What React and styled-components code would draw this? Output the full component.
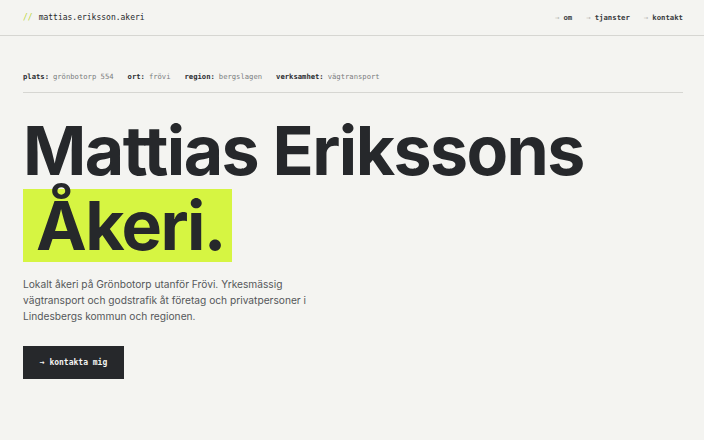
import React from "react";
import styled, { createGlobalStyle } from "styled-components";

const Global = createGlobalStyle`
  html, body { margin: 0; padding: 0; background: #f4f4f1; }
  body { -webkit-font-smoothing: antialiased; }
  * { box-sizing: border-box; }
`;

const mono = `"DejaVu Sans Mono", "Liberation Mono", monospace`;
const sans = `Inter, "Noto Sans", sans-serif`;

const Page = styled.div`
  min-height: 440px;
  background: #f4f4f1;
  color: #26282b;
`;

const Header = styled.header`
  height: 36px;
  display: flex;
  align-items: center;
  justify-content: space-between;
  padding: 0 21px 0 23px;
  border-bottom: 1px solid #d6d6d2;
`;

const Logo = styled.div`
  font-family: ${mono};
  font-size: 8px;
  color: #26282b;
  display: flex;
  gap: 6px;
  margin-top: -1px;
`;

const Slash = styled.span`
  color: #b9d53a;
`;

const Nav = styled.nav`
  display: flex;
  gap: 14px;
  font-family: ${mono};
  font-size: 7.3px;
  font-weight: bold;
  color: #3a3c40;
`;

const NavItem = styled.span`
  display: flex;
  gap: 4px;
`;

const Arrow = styled.span`
  color: #b8b8b4;
  font-weight: normal;
`;

const Main = styled.main`
  padding: 0 21px 0 23px;
`;

const Meta = styled.div`
  display: flex;
  gap: 14px;
  padding-top: 36px;
  padding-bottom: 11px;
  border-bottom: 1px solid #d6d6d2;
  font-family: ${mono};
  font-size: 7.2px;
  color: #7b7d80;
`;

const MetaKey = styled.b`
  color: #2c2e31;
  margin-right: 4px;
`;

const Title = styled.h1`
  margin: 21px 0 0;
  font-family: ${sans};
  font-weight: 700;
  font-size: 68px;
  line-height: 73px;
  letter-spacing: -1.6px;
  color: #26282b;
`;

const Mark = styled.span`
  display: inline-block;
  background: #d6f542;
  padding: 0 7px 0 13px;
  margin-top: 2px;
  line-height: 73px;
`;

const Lead = styled.p`
  margin: 14px 0 0;
  max-width: 310px;
  font-family: ${sans};
  font-size: 10.2px;
  line-height: 16px;
  color: #55575a;
`;

const Button = styled.button`
  margin-top: 22px;
  width: 101px;
  height: 33px;
  border: 0;
  background: #26282b;
  color: #f4f4f1;
  font-family: ${mono};
  font-size: 8px;
  font-weight: bold;
  cursor: pointer;
`;

const metaItems = [
  ["plats:", "grönbotorp 554"],
  ["ort:", "frövi"],
  ["region:", "bergslagen"],
  ["verksamhet:", "vägtransport"],
];

const navItems = ["om", "tjanster", "kontakt"];

export default function App() {
  return (
    <Page>
      <Global />
      <Header>
        <Logo>
          <Slash>//</Slash>
          <span>mattias.eriksson.akeri</span>
        </Logo>
        <Nav>
          {navItems.map((n) => (
            <NavItem key={n}>
              <Arrow>→</Arrow>
              {n}
            </NavItem>
          ))}
        </Nav>
      </Header>
      <Main>
        <Meta>
          {metaItems.map(([k, v]) => (
            <span key={k}>
              <MetaKey>{k}</MetaKey>
              {v}
            </span>
          ))}
        </Meta>
        <Title>
          Mattias Erikssons
          <br />
          <Mark>Åkeri.</Mark>
        </Title>
        <Lead>
          Lokalt åkeri på Grönbotorp utanför Frövi. Yrkesmässig vägtransport
          och godstrafik åt företag och privatpersoner i Lindesbergs kommun och
          regionen.
        </Lead>
        <Button>→ kontakta mig</Button>
      </Main>
    </Page>
  );
}
